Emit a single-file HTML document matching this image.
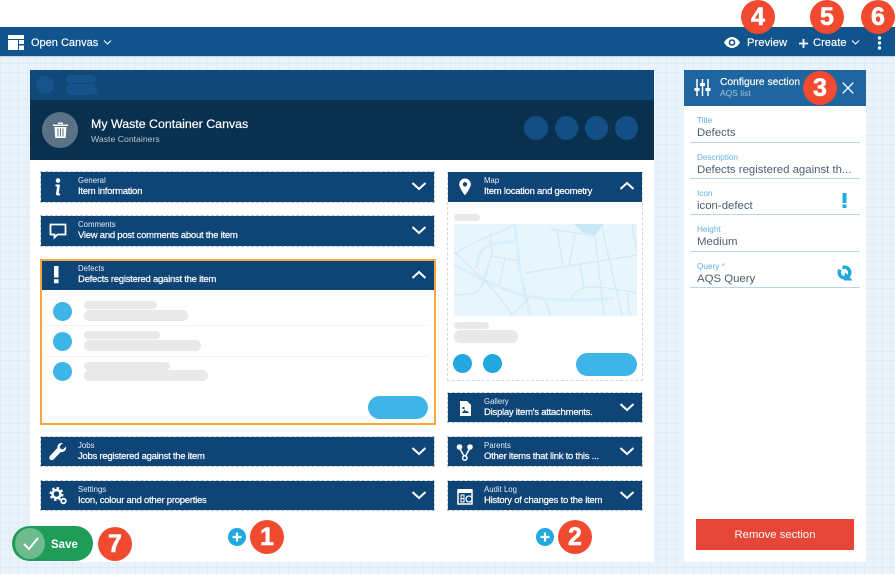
<!DOCTYPE html>
<html><head><meta charset="utf-8"><style>
html,body{margin:0;padding:0}
body{width:895px;height:574px;overflow:hidden;position:relative;background-color:#e8f3fb;background-image:linear-gradient(#dfecf7 1px,transparent 1px),linear-gradient(90deg,#dfecf7 1px,transparent 1px);background-size:9px 9px;font-family:"Liberation Sans",sans-serif;color:#fff}
div,svg,span.a{position:absolute}
.t{white-space:nowrap;line-height:1}
.bar{background:#0f4476;outline:1px dashed #c4c8ce}
.s1{left:37px;top:4px;font-size:7.800px;color:#e4edf5;white-space:nowrap;line-height:10px}
.s2{left:37px;top:13px;font-size:9.500px;letter-spacing:-.25px;color:#fff;white-space:nowrap;line-height:13px;-webkit-text-stroke:.2px #fff}
.ic{left:7px;top:5px;width:20px;height:20px}
.ch{right:7px;top:8px;width:16px;height:12px}
.r{border-radius:50%;background:#f04a30;width:34px;height:34px;font-weight:bold;font-size:25px;text-align:center;line-height:34px;color:#fff;-webkit-text-stroke:.6px #fff}
.g{background:#e9e9e9;border-radius:6px}
.b{background:#3fb4e6;border-radius:50%}
.lb{left:13px;font-size:8.200px;color:#62b1e8;line-height:10px;white-space:nowrap}
.vl{left:13px;font-size:11.400px;color:#4d5e70;line-height:14px;white-space:nowrap}
.ln{left:6px;width:170px;height:1px;background:#b4d6ef}
</style></head><body>
<div style="left:0;top:0;width:895px;height:27px;background:#fff"></div>
<div style="left:0;top:27px;width:895px;height:30px;background:#11538c;border-bottom:1px solid #c6d3df;box-sizing:border-box"></div>
<svg style="left:8px;top:35px" width="16" height="15" viewBox="0 0 16 15"><path fill="#fff" d="M0 0h16v4H0zM0 5h10v10H0zM11 5h5v4h-5zM11 10.500h5V15h-5z"/></svg>
<div class="t" style="left:31px;top:38px;font-size:11px;-webkit-text-stroke:.15px #fff">Open Canvas</div>
<svg style="left:103px;top:39px" width="9" height="7" viewBox="0 0 9 7"><path d="M1 1.500l3.500 3.500L8 1.500" fill="none" stroke="#fff" stroke-width="1.100"/></svg>

<svg style="left:724px;top:37px" width="16" height="11" viewBox="0 0 16 11"><path fill="#fff" fill-rule="evenodd" d="M0 5.500C2 2 5 0 8 0s6 2 8 5.500C14 9 11 11 8 11S2 9 0 5.500zM8 2.200a3.300 3.300 0 1 0 0 6.600 3.300 3.300 0 0 0 0-6.600z"/><circle cx="8" cy="5.500" r="1.800" fill="#fff"/></svg>
<div class="t" style="left:747px;top:38px;font-size:11.300px;-webkit-text-stroke:.15px #fff">Preview</div>
<svg style="left:799px;top:39px" width="9" height="9" viewBox="0 0 9 9"><path d="M4.500 0v9M0 4.500h9" stroke="#fff" stroke-width="1.800"/></svg>
<div class="t" style="left:813px;top:38px;font-size:11.200px;-webkit-text-stroke:.15px #fff">Create</div>
<svg style="left:851px;top:39px" width="9" height="7" viewBox="0 0 9 7"><path d="M1 1.500l3.500 3.500L8 1.500" fill="none" stroke="#fff" stroke-width="1.100"/></svg>
<svg style="left:877px;top:36px" width="5" height="14" viewBox="0 0 5 14"><circle cx="2.500" cy="2" r="1.700" fill="#fff"/><circle cx="2.500" cy="7" r="1.700" fill="#fff"/><circle cx="2.500" cy="12" r="1.700" fill="#fff"/></svg>

<!-- canvas -->
<div style="left:30px;top:70px;width:624px;height:492px;background:#fff"></div>
<div style="left:30px;top:70px;width:624px;height:30px;background:#10487a"></div>
<div style="left:36px;top:76px;width:18px;height:18px;border-radius:50%;background:#15538a"></div>
<div style="left:66px;top:75px;width:30px;height:8px;border-radius:5px;background:#15538a"></div>
<div style="left:66px;top:84px;width:31px;height:11px;border-radius:6px;background:#15538a"></div>
<div style="left:30px;top:100px;width:624px;height:60px;background:#0a3050"></div>
<div style="left:42px;top:112px;width:36px;height:36px;border-radius:50%;background:#5b7286"></div>
<svg style="left:53px;top:122px" width="15" height="16" viewBox="0 0 15 16"><path fill="#fff" d="M0 2.500h15V4H0zM5 .5h5V2H5zM1.500 5h12l-.8 11H2.300zM4.500 6.500v8h1v-8zm2.500 0v8h1v-8zm2.500 0v8h1v-8z" fill-rule="evenodd"/></svg>
<div class="t" style="left:91px;top:118px;font-size:12.400px;-webkit-text-stroke:.2px #fff">My Waste Container Canvas</div>
<div class="t" style="left:91px;top:135px;font-size:8.700px;color:#b7c4cf">Waste Containers</div>
<div class="b" style="left:524px;top:116px;width:24px;height:24px;background:#134f85"></div>
<div class="b" style="left:555px;top:116px;width:23px;height:24px;background:#134f85"></div>
<div class="b" style="left:585px;top:116px;width:23px;height:24px;background:#134f85"></div>
<div class="b" style="left:615px;top:116px;width:23px;height:24px;background:#134f85"></div>

<!-- left sections -->
<div class="bar" style="left:41px;top:172px;width:393px;height:30px">
<svg class="ic" viewBox="0 0 20 20"><circle cx="10" cy="3.500" r="2.300" fill="#fff"/><path fill="#fff" d="M7.500 7.500h4.500l-1.200 8.500c0 .8.500.8 1.400.5v1.500c-1.500.7-4.200 1-4.200-1.300l1-6.500c0-.7-.5-1-1.500-1z"/></svg>
<div class="s1">General</div><div class="s2">Item information</div>
<svg class="ch" viewBox="0 0 16 12"><path d="M1.500 3l6.500 6 6.500-6" fill="none" stroke="#fff" stroke-width="2"/></svg></div>
<div class="bar" style="left:41px;top:216px;width:393px;height:30px">
<svg class="ic" viewBox="0 0 20 20"><path d="M2.500 3.500h15v10h-8l-3 3v-3h-4z" fill="none" stroke="#fff" stroke-width="1.800"/></svg>
<div class="s1">Comments</div><div class="s2">View and post comments about the item</div>
<svg class="ch" viewBox="0 0 16 12"><path d="M1.500 3l6.500 6 6.500-6" fill="none" stroke="#fff" stroke-width="2"/></svg></div>

<div style="left:40px;top:259px;width:396px;height:166px;box-sizing:border-box;border:2px solid #f9a63a;background:#fff"></div>
<div style="left:42px;top:261px;width:392px;height:29px;background:#0f4476">
<svg style="left:4px;top:4px" width="20" height="20" viewBox="0 0 20 20"><path fill="#fff" d="M8 1h4.500v11.500H8zM8 14.200h4.500v4H8z"/></svg>
<div class="s1" style="left:36px;top:3px">Defects</div><div class="s2" style="left:36px;top:12px">Defects registered against the item</div>
<svg class="ch" style="top:8px" viewBox="0 0 16 12"><path d="M1.500 9l6.500-6 6.500 6" fill="none" stroke="#fff" stroke-width="2"/></svg></div>
<div class="b" style="left:53px;top:302px;width:19px;height:19px"></div>
<div class="g" style="left:84px;top:301px;width:73px;height:8px"></div>
<div class="g" style="left:84px;top:310px;width:104px;height:11px"></div>
<div style="left:47px;top:325px;width:381px;height:1px;background:#f3f3f3"></div>
<div class="b" style="left:53px;top:332px;width:19px;height:19px"></div>
<div class="g" style="left:84px;top:331px;width:76px;height:8px"></div>
<div class="g" style="left:84px;top:340px;width:117px;height:11px"></div>
<div style="left:47px;top:356px;width:381px;height:1px;background:#f3f3f3"></div>
<div class="b" style="left:53px;top:362px;width:19px;height:19px"></div>
<div class="g" style="left:84px;top:362px;width:86px;height:8px"></div>
<div class="g" style="left:84px;top:370px;width:124px;height:11px"></div>
<div style="left:368px;top:396px;width:60px;height:23px;border-radius:12px;background:#3fb4e6"></div>

<div class="bar" style="left:41px;top:437px;width:393px;height:29px">
<svg class="ic" viewBox="0 0 20 20"><path fill="#fff" d="M18 4.500l-3 3-2.500-.8-.8-2.500 3-3c-2.800-.8-5.800 1.300-5.300 4.800L2.200 13.800c-2.500 2.600 1 6 3.500 3.500l7-7.200c3.500.6 6.100-2.500 5.300-5.600z"/></svg>
<div class="s1">Jobs</div><div class="s2">Jobs registered against the item</div>
<svg class="ch" viewBox="0 0 16 12"><path d="M1.500 3l6.500 6 6.500-6" fill="none" stroke="#fff" stroke-width="2"/></svg></div>
<div class="bar" style="left:41px;top:481px;width:393px;height:29px">
<svg class="ic" viewBox="0 0 20 20"><circle cx="8.500" cy="8" r="4" fill="none" stroke="#fff" stroke-width="2.500"/><circle cx="8.500" cy="8" r="6" fill="none" stroke="#fff" stroke-width="2" stroke-dasharray="2.500 2.200"/><circle cx="15.500" cy="15" r="2.300" fill="none" stroke="#fff" stroke-width="1.800"/></svg>
<div class="s1">Settings</div><div class="s2">Icon, colour and other properties</div>
<svg class="ch" viewBox="0 0 16 12"><path d="M1.500 3l6.500 6 6.500-6" fill="none" stroke="#fff" stroke-width="2"/></svg></div>

<!-- right col -->
<div style="left:447px;top:172px;width:196px;height:209px;box-sizing:border-box;border:1px dashed #d5d7da"></div>
<div style="left:448px;top:172px;width:194px;height:30px;background:#0f4476">
<svg class="ic" viewBox="0 0 20 20"><path fill="#fff" fill-rule="evenodd" d="M10 1.500a5.800 5.800 0 0 0-5.800 5.800c0 4 5.800 11 5.800 11s5.800-7 5.800-11A5.800 5.800 0 0 0 10 1.500zm0 3.600a2.200 2.200 0 1 1 0 4.400 2.200 2.200 0 0 1 0-4.400z"/></svg>
<div class="s1" style="left:36px">Map</div><div class="s2" style="left:36px">Item location and geometry</div>
<svg class="ch" viewBox="0 0 16 12"><path d="M1.500 9l6.500-6 6.500 6" fill="none" stroke="#fff" stroke-width="2"/></svg></div>
<div class="g" style="left:454px;top:214px;width:26px;height:7px"></div>
<svg style="left:454px;top:224px" width="183" height="92" viewBox="0 0 183 92"><rect width="183" height="92" fill="#e8f5fc"/>
<g fill="none" stroke="#d8f0fb" stroke-width="3"><path d="M0 41C15 48 25 54 36 59S60 69 73 72s32 4 47 4 30-1 40-2"/><path d="M23 44C23 34 26 28 30 24S48 18 61 18"/><path d="M61 0l5 47 10 44"/></g>
<g fill="none" stroke="#d0ebf8" stroke-width="1.300"><path d="M0 30C13 22 27 15 40 10S55 3 61 0"/><path d="M0 28C10 37 20 47 30 56S50 78 58 91"/><path d="M36 9l2 20-8 27"/><path d="M38 32l27 5M51 34l-6 28"/><path d="M71 49l112-18"/><path d="M96 5l45 7M103 6l6 36M121 11l-6 30M126 41l4 23M141 12l9 79M148 4l15 65 5 22M178 0l5 29"/><path d="M0 71c8 0 14-1 20-2s8-8 10-13"/><path d="M115 76c4-6 9-10 15-12s16-1 23 0 20 3 30 5"/><path d="M58 91l17-17M91 76l5 15M173 69l3 22"/></g>
<path d="M120 0h30l-9 11-11-2z" fill="#c9e8f6"/></svg>
<div class="g" style="left:454px;top:322px;width:35px;height:7px"></div>
<div class="g" style="left:454px;top:330px;width:64px;height:13px"></div>
<div class="b" style="left:453px;top:354px;width:19px;height:19px;background:#22a8e0"></div>
<div class="b" style="left:483px;top:354px;width:19px;height:19px;background:#22a8e0"></div>
<div style="left:576px;top:353px;width:61px;height:23px;border-radius:12px;background:#3fb4e6"></div>

<div class="bar" style="left:448px;top:393px;width:194px;height:29px">
<svg class="ic" viewBox="0 0 20 20"><path fill="#fff" d="M5 3h7l4 4v11H5z"/><path fill="#0f4476" d="M7 15l2.500-3.500 1.500 2 1-1 2 2.500zM7.500 9h2v2h-2z"/></svg>
<div class="s1" style="left:36px">Gallery</div><div class="s2" style="left:36px">Display item's attachments.</div>
<svg class="ch" viewBox="0 0 16 12"><path d="M1.500 3l6.500 6 6.500-6" fill="none" stroke="#fff" stroke-width="2"/></svg></div>
<div class="bar" style="left:448px;top:437px;width:194px;height:29px">
<svg class="ic" viewBox="0 0 20 20"><circle cx="4.500" cy="5" r="2.800" fill="#fff"/><circle cx="15" cy="5" r="2.800" fill="#fff"/><circle cx="9.800" cy="16" r="2.200" fill="none" stroke="#fff" stroke-width="1.500"/><path d="M4.500 6l4.500 8M15 6l-4.500 8" stroke="#fff" stroke-width="1.500"/></svg>
<div class="s1" style="left:36px">Parents</div><div class="s2" style="left:36px">Other items that link to this ...</div>
<svg class="ch" viewBox="0 0 16 12"><path d="M1.500 3l6.500 6 6.500-6" fill="none" stroke="#fff" stroke-width="2"/></svg></div>
<div class="bar" style="left:448px;top:481px;width:194px;height:29px">
<svg class="ic" viewBox="0 0 20 20"><path d="M3 4h14v14H3z" fill="none" stroke="#fff" stroke-width="1.500"/><path d="M3 3h14v4H3z" fill="#fff"/><path d="M6 9h3v7H6zM6 12.500h3" fill="none" stroke="#fff"/><circle cx="14" cy="13" r="3" fill="#0f4476" stroke="#fff" stroke-width="1.300"/></svg>
<div class="s1" style="left:36px">Audit Log</div><div class="s2" style="left:36px">History of changes to the item</div>
<svg class="ch" viewBox="0 0 16 12"><path d="M1.500 3l6.500 6 6.500-6" fill="none" stroke="#fff" stroke-width="2"/></svg></div>

<!-- plus -->
<svg style="left:228px;top:528px" width="18" height="18" viewBox="0 0 18 18"><circle cx="9" cy="9" r="9" fill="#22a8e0"/><path d="M9 4.500v9M4.500 9h9" stroke="#fff" stroke-width="2.200"/></svg>
<svg style="left:536px;top:528px" width="18" height="18" viewBox="0 0 18 18"><circle cx="9" cy="9" r="9" fill="#22a8e0"/><path d="M9 4.500v9M4.500 9h9" stroke="#fff" stroke-width="2.200"/></svg>

<!-- save -->
<div style="left:12px;top:526px;width:81px;height:35px;border-radius:18px;background:#1f9d58"></div>
<div style="left:15px;top:528px;width:30px;height:31px;border-radius:50%;background:#6dbb8e"></div>
<svg style="left:22px;top:536px" width="18" height="15" viewBox="0 0 18 15"><path d="M2 8l5 5 9-11" fill="none" stroke="#fff" stroke-width="2"/></svg>
<div class="t" style="left:51px;top:540px;font-size:11.500px;font-weight:bold">Save</div>

<!-- config panel -->
<div style="left:684px;top:70px;width:182px;height:492px;background:#fff"></div>
<div style="left:684px;top:70px;width:182px;height:36px;background:#1f659f"></div>
<svg style="left:694px;top:79px" width="17" height="17" viewBox="0 0 17 17"><path d="M3 0v17M8.500 0v17M14 0v17" stroke="#fff" stroke-width="1.500"/><path d="M.5 9h5v3h-5zM6 4h5v3H6zM11.500 9h5v3h-5z" fill="#fff"/></svg>
<div class="t" style="left:720px;top:78px;font-size:10.300px;-webkit-text-stroke:.15px #fff">Configure section</div>
<div class="t" style="left:720px;top:89px;font-size:8.500px;color:#a8c4dc">AQS list</div>
<svg style="left:842px;top:82px" width="12" height="12" viewBox="0 0 12 12"><path d="M.7.700l10.600 10.600M11.300.700L.7 11.300" stroke="#fff" stroke-width="1.300"/></svg>

<div style="left:684px;top:106px;width:182px;height:190px">
<div class="lb" style="top:10px">Title</div><div class="vl" style="top:20px">Defects</div><div class="ln" style="top:36px"></div>
<div class="lb" style="top:47px">Description</div><div class="vl" style="top:57px">Defects registered against th...</div><div class="ln" style="top:72px"></div>
<div class="lb" style="top:83px">Icon</div><div class="vl" style="top:93px">icon-defect</div><div class="ln" style="top:108px"></div>
<div class="lb" style="top:119px">Height</div><div class="vl" style="top:129px">Medium</div><div class="ln" style="top:145px"></div>
<div class="lb" style="top:156px">Query <span style="color:#f9a63a">*</span></div><div class="vl" style="top:166px">AQS Query</div><div class="ln" style="top:181px"></div>
</div>
<svg style="left:841px;top:192px" width="7" height="16" viewBox="0 0 7 16"><path fill="#22a8e0" d="M1.500 1h4v10h-4zM1.500 12.500h4V16h-4z"/></svg>
<svg style="left:837px;top:265px" width="16" height="16" viewBox="0 0 16 16"><circle cx="7.500" cy="7.500" r="5.300" fill="none" stroke="#22a8e0" stroke-width="3.400"/><path d="M8 7l7.500 8.500H7z" fill="#22a8e0"/><path d="M0 3l5.500-2.500V6z" fill="#fff"/></svg>
<div style="left:696px;top:519px;width:158px;height:31px;background:#e74537;text-align:center;font-size:11.300px;line-height:33px">Remove section</div>

<!-- numbers -->
<div class="r" style="left:250px;top:520px">1</div>
<div class="r" style="left:558px;top:520px">2</div>
<div class="r" style="left:803px;top:71px">3</div>
<div class="r" style="left:741px;top:0">4</div>
<div class="r" style="left:810px;top:0">5</div>
<div class="r" style="left:861px;top:0">6</div>
<div class="r" style="left:98px;top:527px">7</div>
</body></html>
